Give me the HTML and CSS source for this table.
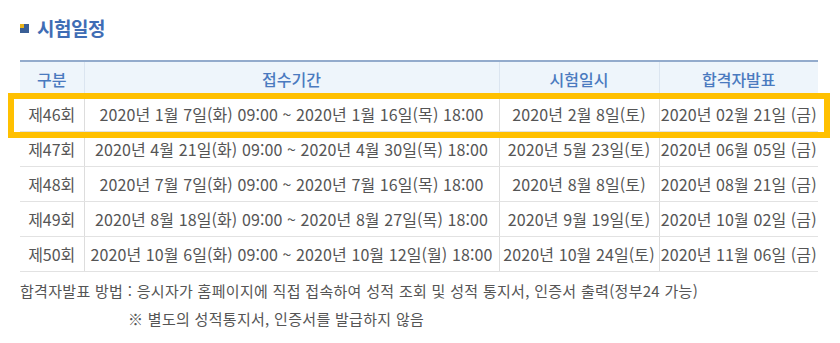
FILE: index.html
```html
<!DOCTYPE html>
<html lang="ko">
<head>
<meta charset="utf-8">
<title>시험일정</title>
<link rel="stylesheet" href="styles.css">
</head>
<body>
<div class="page">
  <h2 class="title"><span class="bullet"><span class="bullet-corner"></span></span>시험일정</h2>
  <div class="table-wrap">
    <table class="schedule">
      <colgroup>
        <col class="c1"><col class="c2"><col class="c3"><col class="c4">
      </colgroup>
      <thead>
        <tr><th>구분</th><th>접수기간</th><th>시험일시</th><th>합격자발표</th></tr>
      </thead>
      <tbody>
        <tr><td>제46회</td><td>2020년 1월 7일(화) 09:00 ~ 2020년 1월 16일(목) 18:00</td><td>2020년 2월 8일(토)</td><td>2020년 02월 21일 (금)</td></tr>
        <tr><td>제47회</td><td>2020년 4월 21일(화) 09:00 ~ 2020년 4월 30일(목) 18:00</td><td>2020년 5월 23일(토)</td><td>2020년 06월 05일 (금)</td></tr>
        <tr><td>제48회</td><td>2020년 7월 7일(화) 09:00 ~ 2020년 7월 16일(목) 18:00</td><td>2020년 8월 8일(토)</td><td>2020년 08월 21일 (금)</td></tr>
        <tr><td>제49회</td><td>2020년 8월 18일(화) 09:00 ~ 2020년 8월 27일(목) 18:00</td><td>2020년 9월 19일(토)</td><td>2020년 10월 02일 (금)</td></tr>
        <tr><td>제50회</td><td>2020년 10월 6일(화) 09:00 ~ 2020년 10월 12일(월) 18:00</td><td>2020년 10월 24일(토)</td><td>2020년 11월 06일 (금)</td></tr>
      </tbody>
    </table>
    <div class="highlight"></div>
  </div>
  <p class="note">합격자발표 방법 : 응시자가 홈페이지에 직접 접속하여 성적 조회 및 성적 통지서, 인증서 출력(정부24 가능)</p>
  <p class="note sub">※ 별도의 성적통지서, 인증서를 발급하지 않음</p>
</div>
</body>
</html>
```
FILE: styles.css
```css
html, body {
  margin: 0;
  padding: 0;
  background: #ffffff;
}
body {
  font-family: "Noto Sans CJK KR", "Noto Sans", sans-serif;
  color: #555555;
}
.page {
  padding: 14px 22px 0 20px;
}
.title {
  display: flex;
  align-items: center;
  margin: 0;
  height: 26px;
  font-size: 19px;
  font-weight: bold;
  color: #3f6db5;
  letter-spacing: -0.5px;
}
.bullet {
  position: relative;
  width: 9px;
  height: 9px;
  background: #3a5f96;
  margin-right: 8px;
  margin-top: 2px;
}
.bullet-corner {
  position: absolute;
  left: 0;
  top: 0;
  width: 4px;
  height: 4px;
  background: #e8b21a;
}
.table-wrap {
  position: relative;
  margin-top: 20px;
  width: 798px;
}
.schedule {
  width: 798px;
  border-collapse: collapse;
  table-layout: fixed;
  font-size: 16px;
  letter-spacing: 0.1px;
}
.c1 { width: 64px; }
.c2 { width: 415px; }
.c3 { width: 160px; }
.c4 { width: 159px; }
.schedule th {
  height: 34px;
  padding: 0;
  background: #eef5fb;
  color: #4a7abf;
  font-weight: 500;
  letter-spacing: 0;
  border-top: 2px solid #93abcc;
  border-left: 1px solid #dbe5f0;
  border-bottom: 1px solid #dde3ea;
}
.schedule td {
  height: 34px;
  padding: 0;
  text-align: center;
  white-space: nowrap;
  border-left: 1px solid #dddddd;
  border-bottom: 1px solid #e2e2e2;
  color: #555555;
}
.schedule td:first-child {
  letter-spacing: 0;
}
.schedule th:first-child,
.schedule td:first-child {
  border-left: none;
}
.highlight {
  position: absolute;
  left: -12px;
  top: 33px;
  width: 810px;
  height: 33px;
  border: 6px solid #ffc000;
}
.note {
  margin: 0;
  font-size: 15px;
  line-height: 28px;
  letter-spacing: 0.3px;
  color: #555555;
}
.note:first-of-type {
  margin-top: 5px;
}
.sub {
  padding-left: 108px;
}
```
